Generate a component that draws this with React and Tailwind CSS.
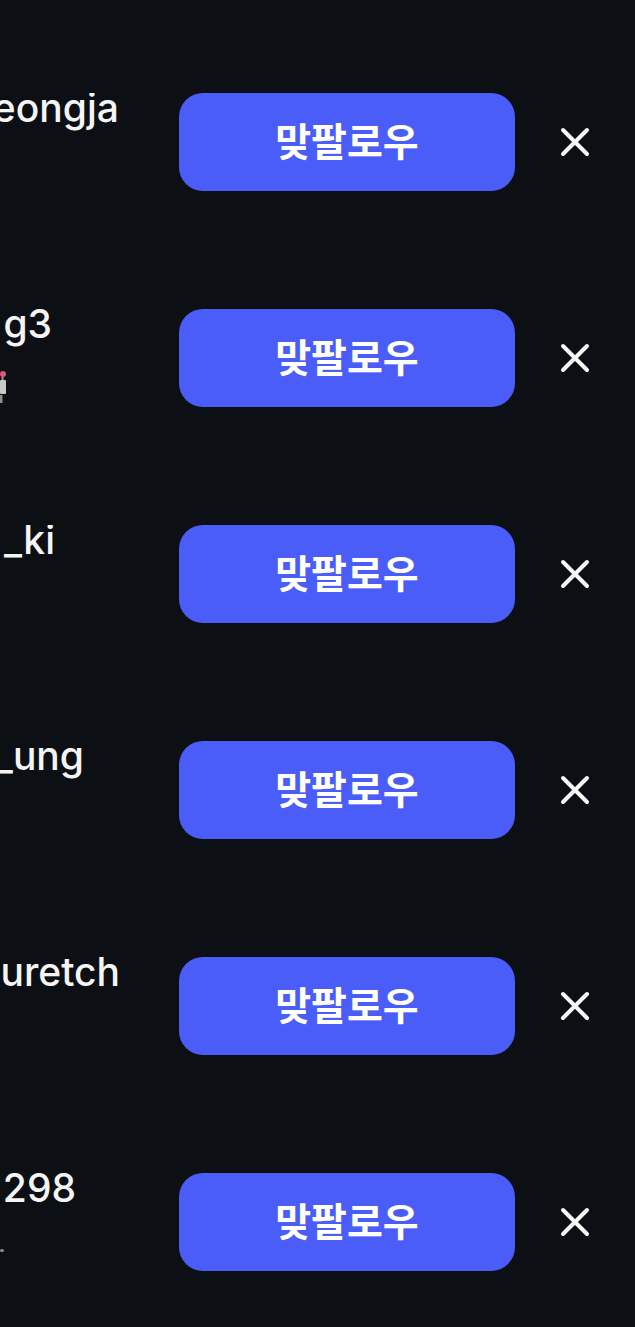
const rows = [
  { name: "eongja", pr: "pr-[60px]" },
  { name: "g3", pr: "pr-[127px]", sub: "robot" },
  { name: "_ki", pr: "pr-[124px]" },
  { name: "_ung", pr: "pr-[95px]" },
  { name: "uretch", pr: "pr-[59px]" },
  { name: "298", pr: "pr-[103px]", sub: "dot" },
];

function Robot() {
  return (
    <svg width="8" height="36" viewBox="0 0 8 36" className="block">
      <rect x="1.5" y="3" width="2" height="8" fill="#9a9a9a" />
      <circle cx="3" cy="3" r="3" fill="#e0557f" />
      <rect x="0" y="9" width="6" height="14" rx="1" fill="#c9c9c9" />
      <rect x="0" y="24" width="2.5" height="8" fill="#8d8d8d" />
    </svg>
  );
}

function Row({ name, pr, sub }) {
  return (
    <div className="flex h-[216px] items-start pt-[59px]">
      <div className={`flex h-[98px] w-[179px] shrink-0 flex-col overflow-hidden ${pr}`}>
        <div className="h-[60px] self-end whitespace-nowrap text-[39px] font-[550] leading-[30px] text-[#f5f5f5]">
          {name}
        </div>
        {sub === "robot" && <div className="mt-[3px] h-[36px] self-start"><Robot /></div>}
        {sub === "dot" && <div className="mt-[16px] h-[3px] w-[4px] self-start rounded-full bg-[#8a8a8a]" />}
      </div>
      <button className="flex h-[98px] w-[336px] shrink-0 items-center justify-center rounded-[24px] bg-[#4a5df9] pt-[1px] text-[39px] font-bold text-white">
        맞팔로우
      </button>
      <div className="flex h-[98px] flex-1 items-center justify-center">
        <svg width="34" height="34" viewBox="0 0 34 34" fill="none" stroke="#f7f7f7" strokeWidth="4" strokeLinecap="round">
          <path d="M5 5 L29 29 M29 5 L5 29" />
        </svg>
      </div>
    </div>
  );
}

export default function App() {
  return (
    <div className="h-[1327px] w-[635px] overflow-hidden bg-[#0c1014] pt-[34px] font-['Inter','Noto_Sans_CJK_KR',sans-serif]">
      {rows.map((r) => (
        <Row key={r.name} {...r} />
      ))}
    </div>
  );
}
